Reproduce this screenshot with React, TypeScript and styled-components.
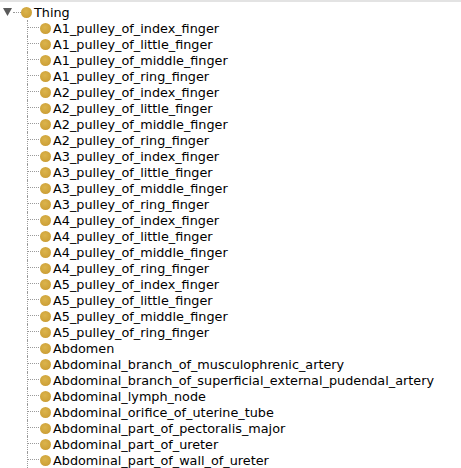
import React from 'react';
import styled, { createGlobalStyle } from 'styled-components';

const GlobalStyle = createGlobalStyle`
  html, body {
    margin: 0;
    padding: 0;
    background: #ffffff;
  }
  body {
    font-family: Tahoma, "DejaVu Sans", Verdana, sans-serif;
  }
`;

const children = [
  'A1_pulley_of_index_finger',
  'A1_pulley_of_little_finger',
  'A1_pulley_of_middle_finger',
  'A1_pulley_of_ring_finger',
  'A2_pulley_of_index_finger',
  'A2_pulley_of_little_finger',
  'A2_pulley_of_middle_finger',
  'A2_pulley_of_ring_finger',
  'A3_pulley_of_index_finger',
  'A3_pulley_of_little_finger',
  'A3_pulley_of_middle_finger',
  'A3_pulley_of_ring_finger',
  'A4_pulley_of_index_finger',
  'A4_pulley_of_little_finger',
  'A4_pulley_of_middle_finger',
  'A4_pulley_of_ring_finger',
  'A5_pulley_of_index_finger',
  'A5_pulley_of_little_finger',
  'A5_pulley_of_middle_finger',
  'A5_pulley_of_ring_finger',
  'Abdomen',
  'Abdominal_branch_of_musculophrenic_artery',
  'Abdominal_branch_of_superficial_external_pudendal_artery',
  'Abdominal_lymph_node',
  'Abdominal_orifice_of_uterine_tube',
  'Abdominal_part_of_pectoralis_major',
  'Abdominal_part_of_ureter',
  'Abdominal_part_of_wall_of_ureter',
];

const Panel = styled.div`
  width: 461px;
  height: 468px;
  overflow: hidden;
  border-top: 2px solid #e3e3e3;
  padding-top: 2px;
  box-sizing: border-box;
`;

const Row = styled.div`
  display: flex;
  align-items: center;
  height: 16px;
  font-size: 12.8px;
  color: #000;
  white-space: nowrap;
`;

const Toggle = styled.svg`
  width: 9px;
  height: 8px;
  margin-left: 3px;
  flex: none;
`;

const RootStub = styled.span`
  width: 8px;
  margin-left: 1px;
  height: 0;
  border-top: 1px dotted #9a9a9a;
  flex: none;
`;

const Branch = styled.span`
  position: relative;
  align-self: stretch;
  width: 12px;
  margin-left: 27px;
  flex: none;
  border-left: 1px dotted #9a9a9a;

  &::after {
    content: '';
    position: absolute;
    left: 0;
    top: 7px;
    width: 11px;
    border-top: 1px dotted #9a9a9a;
  }
`;

const Dot = styled.span`
  width: 11px;
  height: 11px;
  border-radius: 50%;
  flex: none;
  background: radial-gradient(circle at 45% 40%, #dbb44c 0%, #cfa33a 60%, #c0932e 100%);
`;

const Label = styled.span`
  margin-left: 2px;
`;

export default function App() {
  return (
    <>
      <GlobalStyle />
      <Panel>
        <Row>
          <Toggle viewBox="0 0 9 8">
            <path d="M0 0 H9 L4.5 8 Z" fill="#5a5a5a" />
          </Toggle>
          <RootStub />
          <Dot />
          <Label>Thing</Label>
        </Row>
        {children.map((name) => (
          <Row key={name}>
            <Branch />
            <Dot />
            <Label>{name}</Label>
          </Row>
        ))}
      </Panel>
    </>
  );
}
